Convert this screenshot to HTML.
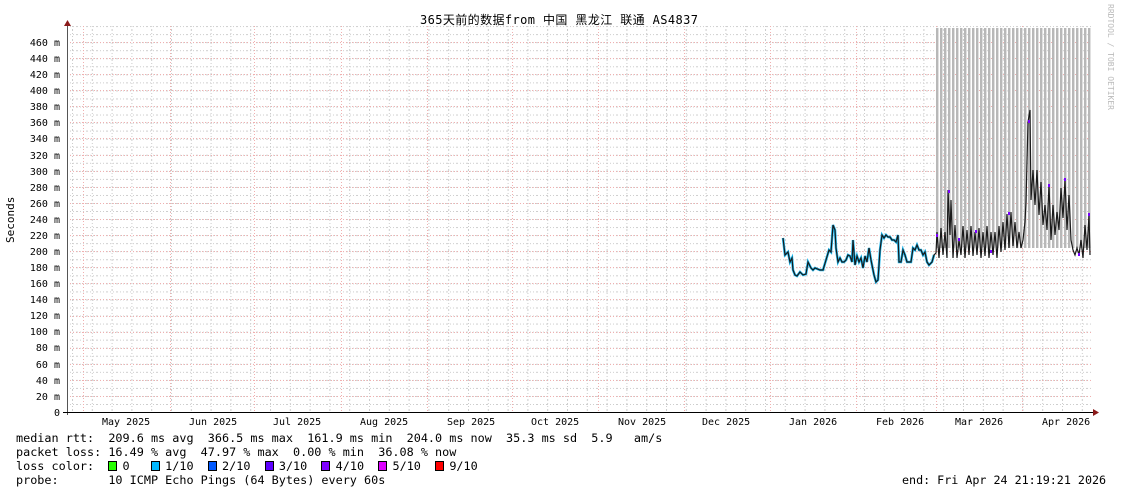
<!DOCTYPE html>
<html><head><meta charset="utf-8"><style>
html,body{margin:0;padding:0;background:#fff;}
body{width:1121px;height:494px;overflow:hidden;position:relative;font-family:"DejaVu Sans Mono","Liberation Mono","Noto Sans CJK SC",monospace;}
.t{position:absolute;font-size:11px;color:#000;white-space:pre;line-height:13px;}
.s{display:inline-block;width:7px;height:8px;border:1px solid #000;margin-right:-1.9px;vertical-align:-1px;}
</style></head><body>
<svg width="1121" height="494" style="position:absolute;left:0;top:0">
<defs>
<pattern id="hmin" width="10" height="8.04" patternUnits="userSpaceOnUse" x="67" y="404"><line x1="0" y1="0.5" x2="10" y2="0.5" stroke="#ccc" stroke-dasharray="1,2"/></pattern>
<pattern id="vmin" width="19.8" height="10" patternUnits="userSpaceOnUse" x="72" y="0"><line x1="0.5" y1="0" x2="0.5" y2="10" stroke="#ccc" stroke-dasharray="1,2"/></pattern>
<pattern id="smoke" width="4" height="10" patternUnits="userSpaceOnUse" x="936" y="0"><rect x="0" y="0" width="2" height="10" fill="#b8b8b8"/><rect x="2" y="0" width="1" height="10" fill="#e0e0e0"/></pattern>
</defs>
<rect x="67" y="26" width="1026" height="386" fill="url(#hmin)"/>
<rect x="67" y="26" width="1026" height="386" fill="url(#vmin)"/>
<g stroke="#f0b0b0" stroke-dasharray="1,2">
<line x1="67" y1="396.5" x2="1093" y2="396.5"/><line x1="67" y1="380.5" x2="1093" y2="380.5"/><line x1="67" y1="364.5" x2="1093" y2="364.5"/><line x1="67" y1="348.5" x2="1093" y2="348.5"/><line x1="67" y1="332.5" x2="1093" y2="332.5"/><line x1="67" y1="316.5" x2="1093" y2="316.5"/><line x1="67" y1="299.5" x2="1093" y2="299.5"/><line x1="67" y1="283.5" x2="1093" y2="283.5"/><line x1="67" y1="267.5" x2="1093" y2="267.5"/><line x1="67" y1="251.5" x2="1093" y2="251.5"/><line x1="67" y1="235.5" x2="1093" y2="235.5"/><line x1="67" y1="219.5" x2="1093" y2="219.5"/><line x1="67" y1="203.5" x2="1093" y2="203.5"/><line x1="67" y1="187.5" x2="1093" y2="187.5"/><line x1="67" y1="171.5" x2="1093" y2="171.5"/><line x1="67" y1="155.5" x2="1093" y2="155.5"/><line x1="67" y1="138.5" x2="1093" y2="138.5"/><line x1="67" y1="122.5" x2="1093" y2="122.5"/><line x1="67" y1="106.5" x2="1093" y2="106.5"/><line x1="67" y1="90.5" x2="1093" y2="90.5"/><line x1="67" y1="74.5" x2="1093" y2="74.5"/><line x1="67" y1="58.5" x2="1093" y2="58.5"/><line x1="67" y1="42.5" x2="1093" y2="42.5"/>
<line x1="83.5" y1="26" x2="83.5" y2="412"/><line x1="170.5" y1="26" x2="170.5" y2="412"/><line x1="254.5" y1="26" x2="254.5" y2="412"/><line x1="341.5" y1="26" x2="341.5" y2="412"/><line x1="427.5" y1="26" x2="427.5" y2="412"/><line x1="512.5" y1="26" x2="512.5" y2="412"/><line x1="598.5" y1="26" x2="598.5" y2="412"/><line x1="684.5" y1="26" x2="684.5" y2="412"/><line x1="770.5" y1="26" x2="770.5" y2="412"/><line x1="856.5" y1="26" x2="856.5" y2="412"/><line x1="936.5" y1="26" x2="936.5" y2="412"/><line x1="1022.5" y1="26" x2="1022.5" y2="412"/>
</g>
<rect x="936" y="28" width="155" height="220" fill="url(#smoke)"/>
<polyline fill="none" stroke="#19b8f0" stroke-width="2.5" points="783,238 785,255 788,252 790,262 792,258 793,270 795,275 797,276 800,272 803,275 806,274 808,262 811,268 813,270 815,268 820,270 823,270 826,260 829,250 831,252 833,225 835,230 836,248 838,262 840,258 842,262 844,262 846,260 848,255 850,256 852,262 853,240 855,265 857,256 859,262 861,258 863,268 865,256 867,262 869,248 871,260 874,275 876,282 878,280 880,250 882,235 884,238 886,235 888,237 890,237 892,240 894,240 896,242 898,235 899,262 901,262 903,250 905,255 907,262 909,262 911,262 913,248 915,250 917,245 919,250 921,250 923,255 925,252 927,262 929,265 932,262 934,255"/>
<polyline fill="none" stroke="#1a1a1a" stroke-width="1.2" points="783,238 785,255 788,252 790,262 792,258 793,270 795,275 797,276 800,272 803,275 806,274 808,262 811,268 813,270 815,268 820,270 823,270 826,260 829,250 831,252 833,225 835,230 836,248 838,262 840,258 842,262 844,262 846,260 848,255 850,256 852,262 853,240 855,265 857,256 859,262 861,258 863,268 865,256 867,262 869,248 871,260 874,275 876,282 878,280 880,250 882,235 884,238 886,235 888,237 890,237 892,240 894,240 896,242 898,235 899,262 901,262 903,250 905,255 907,262 909,262 911,262 913,248 915,250 917,245 919,250 921,250 923,255 925,252 927,262 929,265 932,262 934,255 936,253 937,232 939,258 941,228 943,255 945,232 947,258 948,190 950,235 951,200 953,258 955,225 957,258 959,240 961,255 963,226 965,258 967,230 969,255 971,226 973,256 975,232 977,255 979,228 981,258 983,232 985,256 987,226 989,258 991,232 993,255 995,232 997,258 999,226 1001,252 1003,222 1005,250 1007,214 1009,248 1011,212 1013,246 1015,222 1017,248 1019,232 1021,248 1023,240 1025,222 1026,202 1028,122 1030,110 1031,200 1033,170 1035,205 1037,170 1039,215 1041,182 1043,225 1045,205 1047,230 1049,185 1051,240 1053,205 1055,235 1057,212 1059,230 1061,188 1063,218 1065,180 1067,230 1069,195 1071,240 1073,250 1075,255 1077,248 1079,255 1081,240 1083,258 1085,225 1087,250 1089,215 1090,255"/>
<g fill="#7a00ff"><rect x="936" y="234" width="2" height="3"/><rect x="948" y="190" width="2" height="3"/><rect x="958" y="238" width="2" height="3"/><rect x="975" y="230" width="2" height="3"/><rect x="990" y="250" width="2" height="3"/><rect x="1008" y="212" width="2" height="3"/><rect x="1028" y="120" width="2" height="3"/><rect x="1048" y="184" width="2" height="3"/><rect x="1064" y="178" width="2" height="3"/><rect x="1078" y="253" width="2" height="3"/><rect x="1088" y="213" width="2" height="3"/></g>
<line x1="67.5" y1="22" x2="67.5" y2="415" stroke="#555"/>
<line x1="63" y1="412.5" x2="1095" y2="412.5" stroke="#000"/>
<polygon points="64,26 71,26 67.5,20" fill="#8b1a1a"/>
<polygon points="1093,409 1093,416 1099,412.5" fill="#8b1a1a"/>
<text x="1108" y="4" font-size="8" fill="#bbb" font-family="DejaVu Sans Mono,monospace" transform="rotate(90 1108 4)">RRDTOOL / TOBI OETIKER</text>
<text x="14" y="243" font-size="11" font-family="DejaVu Sans Mono,monospace" transform="rotate(-90 14 243)">Seconds</text>
</svg>
<div class="t" style="left:420px;top:14px;font-size:12px;letter-spacing:0.4px;">365天前的数据from 中国 黑龙江 联通 AS4837</div>
<div class="t" style="left:0;top:36px;width:60px;text-align:right;font-size:10px;line-height:16.08px;">460 m
440 m
420 m
400 m
380 m
360 m
340 m
320 m
300 m
280 m
260 m
240 m
220 m
200 m
180 m
160 m
140 m
120 m
100 m
 80 m
 60 m
 40 m
 20 m
    0</div>
<div class="t" style="left:102px;top:416px;font-size:10px;">May 2025</div>
<div class="t" style="left:189px;top:416px;font-size:10px;">Jun 2025</div>
<div class="t" style="left:273px;top:416px;font-size:10px;">Jul 2025</div>
<div class="t" style="left:360px;top:416px;font-size:10px;">Aug 2025</div>
<div class="t" style="left:447px;top:416px;font-size:10px;">Sep 2025</div>
<div class="t" style="left:531px;top:416px;font-size:10px;">Oct 2025</div>
<div class="t" style="left:618px;top:416px;font-size:10px;">Nov 2025</div>
<div class="t" style="left:702px;top:416px;font-size:10px;">Dec 2025</div>
<div class="t" style="left:789px;top:416px;font-size:10px;">Jan 2026</div>
<div class="t" style="left:876px;top:416px;font-size:10px;">Feb 2026</div>
<div class="t" style="left:955px;top:416px;font-size:10px;">Mar 2026</div>
<div class="t" style="left:1042px;top:416px;font-size:10px;">Apr 2026</div>
<div class="t" style="left:16px;top:431px;font-size:11.8px;line-height:14px;">median rtt:  209.6 ms avg  366.5 ms max  161.9 ms min  204.0 ms now  35.3 ms sd  5.9   am/s
packet loss: 16.49 % avg  47.97 % max  0.00 % min  36.08 % now
loss color:  <span class="s" style="background:#26ff00"></span> 0   <span class="s" style="background:#00b8ff"></span> 1/10  <span class="s" style="background:#0059ff"></span> 2/10  <span class="s" style="background:#5e00ff"></span> 3/10  <span class="s" style="background:#7e00ff"></span> 4/10  <span class="s" style="background:#dd00ff"></span> 5/10  <span class="s" style="background:#ff0000"></span> 9/10
probe:       10 ICMP Echo Pings (64 Bytes) every 60s</div>
<div class="t" style="left:902px;top:473px;font-size:11.7px;line-height:14px;">end: Fri Apr 24 21:19:21 2026</div>
</body></html>
